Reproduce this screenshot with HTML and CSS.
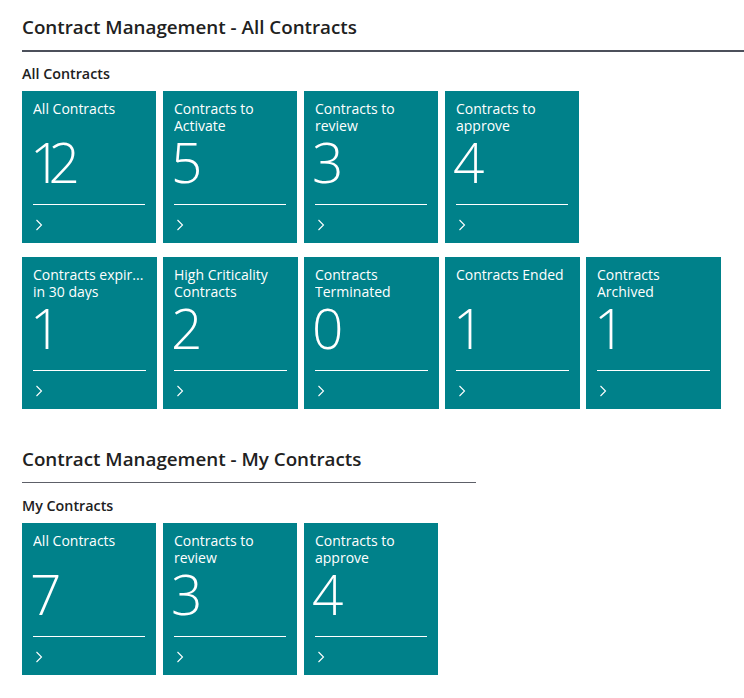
FILE: index.html
```html
<!DOCTYPE html>
<html lang="en">
<head>
<meta charset="utf-8">
<title>Contract Management</title>
<link rel="stylesheet" href="styles.css">
</head>
<body>
<main class="page">
  <section class="section section-first">
    <h1 class="section-title">Contract Management - All Contracts</h1>
    <div class="rule rule-thick"></div>
    <h2 class="group-title">All Contracts</h2>
    <div class="tiles tiles-a">
      <a class="tile"><div class="tile-caption"><span>All Contracts</span></div><div class="tile-value">12</div><div class="tile-line"></div><svg class="chev" width="8" height="12" viewBox="0 0 8 12"><polyline points="1.5,1 6.5,6 1.5,11" fill="none" stroke="#fff" stroke-width="1.1"/></svg></a>
      <a class="tile"><div class="tile-caption"><span>Contracts to</span><span>Activate</span></div><div class="tile-value">5</div><div class="tile-line"></div><svg class="chev" width="8" height="12" viewBox="0 0 8 12"><polyline points="1.5,1 6.5,6 1.5,11" fill="none" stroke="#fff" stroke-width="1.1"/></svg></a>
      <a class="tile"><div class="tile-caption"><span>Contracts to</span><span>review</span></div><div class="tile-value">3</div><div class="tile-line"></div><svg class="chev" width="8" height="12" viewBox="0 0 8 12"><polyline points="1.5,1 6.5,6 1.5,11" fill="none" stroke="#fff" stroke-width="1.1"/></svg></a>
      <a class="tile"><div class="tile-caption"><span>Contracts to</span><span>approve</span></div><div class="tile-value">4</div><div class="tile-line"></div><svg class="chev" width="8" height="12" viewBox="0 0 8 12"><polyline points="1.5,1 6.5,6 1.5,11" fill="none" stroke="#fff" stroke-width="1.1"/></svg></a>
    </div>
    <div class="tiles tiles-b">
      <a class="tile"><div class="tile-caption"><span>Contracts expir...</span><span>in 30 days</span></div><div class="tile-value">1</div><div class="tile-line"></div><svg class="chev" width="8" height="12" viewBox="0 0 8 12"><polyline points="1.5,1 6.5,6 1.5,11" fill="none" stroke="#fff" stroke-width="1.1"/></svg></a>
      <a class="tile"><div class="tile-caption"><span>High Criticality</span><span>Contracts</span></div><div class="tile-value">2</div><div class="tile-line"></div><svg class="chev" width="8" height="12" viewBox="0 0 8 12"><polyline points="1.5,1 6.5,6 1.5,11" fill="none" stroke="#fff" stroke-width="1.1"/></svg></a>
      <a class="tile"><div class="tile-caption"><span>Contracts</span><span>Terminated</span></div><div class="tile-value">0</div><div class="tile-line"></div><svg class="chev" width="8" height="12" viewBox="0 0 8 12"><polyline points="1.5,1 6.5,6 1.5,11" fill="none" stroke="#fff" stroke-width="1.1"/></svg></a>
      <a class="tile"><div class="tile-caption"><span>Contracts Ended</span></div><div class="tile-value">1</div><div class="tile-line"></div><svg class="chev" width="8" height="12" viewBox="0 0 8 12"><polyline points="1.5,1 6.5,6 1.5,11" fill="none" stroke="#fff" stroke-width="1.1"/></svg></a>
      <a class="tile"><div class="tile-caption"><span>Contracts</span><span>Archived</span></div><div class="tile-value">1</div><div class="tile-line"></div><svg class="chev" width="8" height="12" viewBox="0 0 8 12"><polyline points="1.5,1 6.5,6 1.5,11" fill="none" stroke="#fff" stroke-width="1.1"/></svg></a>
    </div>
  </section>

  <section class="section section-second">
    <h1 class="section-title">Contract Management - My Contracts</h1>
    <div class="rule rule-thin"></div>
    <h2 class="group-title">My Contracts</h2>
    <div class="tiles tiles-a">
      <a class="tile"><div class="tile-caption"><span>All Contracts</span></div><div class="tile-value">7</div><div class="tile-line"></div><svg class="chev" width="8" height="12" viewBox="0 0 8 12"><polyline points="1.5,1 6.5,6 1.5,11" fill="none" stroke="#fff" stroke-width="1.1"/></svg></a>
      <a class="tile"><div class="tile-caption"><span>Contracts to</span><span>review</span></div><div class="tile-value">3</div><div class="tile-line"></div><svg class="chev" width="8" height="12" viewBox="0 0 8 12"><polyline points="1.5,1 6.5,6 1.5,11" fill="none" stroke="#fff" stroke-width="1.1"/></svg></a>
      <a class="tile"><div class="tile-caption"><span>Contracts to</span><span>approve</span></div><div class="tile-value">4</div><div class="tile-line"></div><svg class="chev" width="8" height="12" viewBox="0 0 8 12"><polyline points="1.5,1 6.5,6 1.5,11" fill="none" stroke="#fff" stroke-width="1.1"/></svg></a>
    </div>
  </section>
</main>
</body>
</html>
```

FILE: styles.css
```css
* { box-sizing: border-box; }

html, body {
  margin: 0;
  padding: 0;
  background: #ffffff;
}

body {
  font-family: "Open Sans", "Noto Sans", "Liberation Sans", sans-serif;
  color: #212121;
  overflow: hidden;
}

.page {
  padding: 15px 0 0 22px;
  display: flex;
  flex-direction: column;
}

.section {
  display: flex;
  flex-direction: column;
}

.section-second {
  margin-top: 38px;
}

.section-title {
  margin: 0;
  font-size: 18.8px;
  line-height: 24px;
  font-weight: 600;
  color: #212121;
}

.rule {
  margin-top: 11px;
}

.rule-thick {
  height: 2px;
  background: #4c505b;
  margin-right: -10px;
}

.rule-thin {
  height: 1px;
  width: 454px;
  background: #5d6068;
}

.group-title {
  margin: 13px 0 0;
  font-size: 14.3px;
  line-height: 17px;
  font-weight: 600;
  color: #212121;
}

.rule-thin + .group-title {
  margin-top: 14px;
}

.tiles {
  display: flex;
  margin-top: 9px;
}

.tiles-a { gap: 7px; }
.tiles-a .tile { width: 134px; }

.tiles-b {
  gap: 6px;
  margin-top: 14px;
}
.tiles-b .tile { width: 135px; }

.tile {
  height: 152px;
  background: #00818a;
  color: #ffffff;
  padding: 9px 11px 0;
  display: flex;
  flex-direction: column;
  text-decoration: none;
}

.tile-caption {
  height: 34px;
  display: flex;
  flex-direction: column;
  font-size: 14px;
  line-height: 17px;
  white-space: nowrap;
  overflow: hidden;
}

.tile-value {
  font-size: 55px;
  line-height: 55px;
  font-weight: 300;
  height: 55px;
  margin-left: -3px;
  letter-spacing: -13px;
}

.tile-line {
  height: 1px;
  background: #ffffff;
  margin-top: 15px;
}

.chev {
  margin-top: 14px;
  margin-left: 2px;
  display: block;
}
```
